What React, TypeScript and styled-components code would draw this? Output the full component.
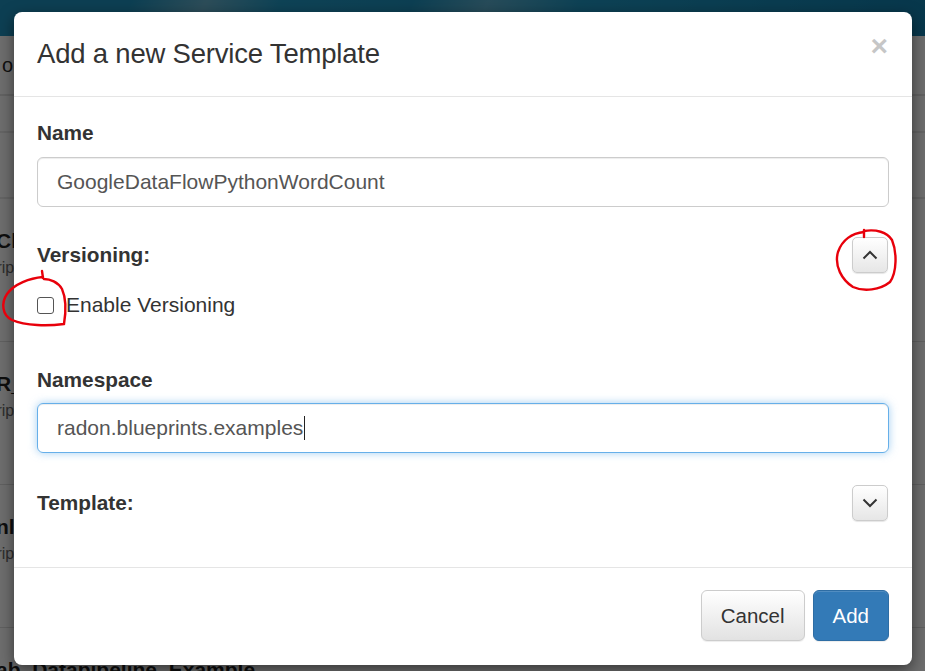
import React, { ReactElement } from 'react';
import styled, { createGlobalStyle } from 'styled-components';

const GlobalStyle = createGlobalStyle`
  html, body {
    margin: 0;
    padding: 0;
    width: 925px;
    height: 671px;
    overflow: hidden;
    font-family: "Liberation Sans", Arial, sans-serif;
    color: #333;
  }
`;

const Page = styled.div`
  position: relative;
  width: 925px;
  height: 671px;
  overflow: hidden;
  background: #dcdcdc;
`;

const TopBar = styled.div`
  height: 36px;
  background: linear-gradient(
    112deg,
    #1a7fa6 0%,
    #1a7fa6 14%,
    #5a9bb3 22%,
    #1d86ad 30%,
    #1a7fa6 44%,
    #4f98b4 52%,
    #1b84ab 62%,
    #0f6f98 100%
  );
`;

const Toolbar = styled.div`
  height: 58px;
  border-bottom: 2px solid #c4c4c4;
  display: flex;
  align-items: center;
  padding-left: 2px;
  font-size: 20px;
  color: #222;
`;

const FilterBar = styled.div`
  height: 35px;
  border-bottom: 2px solid #c8c8c8;
`;

const FilterBarLow = styled.div`
  height: 64px;
  border-bottom: 2px solid #c8c8c8;
`;

const List = styled.div`
  margin-left: -4px;
`;

const ListItem = styled.div`
  height: 143px;
  border-bottom: 1px solid #c0c0c0;
  padding-top: 30px;
  box-sizing: border-box;
  display: flex;
  flex-direction: column;
  gap: 6px;
`;

const ItemTitle = styled.div`
  font-size: 21px;
  font-weight: 700;
  color: #1c1c1c;
  line-height: 24px;
`;

const ItemSub = styled.div`
  font-size: 16px;
  color: #5a5a5a;
  text-indent: -36px;
`;

const Backdrop = styled.div`
  position: absolute;
  inset: 0;
  background: rgba(0, 0, 0, 0.5);
`;

const ModalLayer = styled.div`
  position: absolute;
  inset: 0;
  padding: 12px 13px 6px 14px;
`;

const Dialog = styled.div`
  background: #fff;
  border-radius: 8px;
  box-shadow: 0 5px 15px rgba(0, 0, 0, 0.5);
  display: flex;
  flex-direction: column;
  height: 653px;
`;

const Header = styled.div`
  height: 85px;
  box-sizing: border-box;
  border-bottom: 1px solid #e5e5e5;
  padding: 0 24px 0 23px;
  display: flex;
  align-items: center;
  justify-content: space-between;
`;

const Title = styled.h4`
  margin: 0;
  font-size: 27.5px;
  font-weight: 400;
  color: #333;
  letter-spacing: -0.2px;
`;

const Close = styled.span`
  font-size: 30px;
  font-weight: 700;
  color: #000;
  opacity: 0.22;
  line-height: 1;
  margin-top: -16px;
`;

const Body = styled.div`
  flex: 1;
  padding: 24px 23px 0;
  display: flex;
  flex-direction: column;
`;

const Label = styled.div<{ $gap?: number }>`
  font-size: 20.8px;
  font-weight: 700;
  line-height: 24px;
  color: #333;
  margin-top: ${(p) => p.$gap ?? 0}px;
`;

const Field = styled.div<{ $focused?: boolean; $gap: number }>`
  margin-top: ${(p) => p.$gap}px;
  height: 50px;
  box-sizing: border-box;
  border: 1px solid ${(p) => (p.$focused ? '#66afe9' : '#ccc')};
  border-radius: 6px;
  padding: 0 19px;
  display: flex;
  align-items: center;
  font-size: 21px;
  color: #555;
  box-shadow: ${(p) =>
    p.$focused
      ? 'inset 0 1px 1px rgba(0,0,0,.075), 0 0 8px rgba(102,175,233,.6)'
      : 'inset 0 1px 1px rgba(0,0,0,.075)'};
`;

const Caret = styled.span`
  display: inline-block;
  width: 1px;
  height: 24px;
  background: #222;
  margin-left: 1px;
`;

const ToggleRow = styled.div<{ $gap: number }>`
  margin-top: ${(p) => p.$gap}px;
  display: flex;
  align-items: center;
  justify-content: space-between;
  height: 35px;
`;

const ToggleButton = styled.button`
  width: 36px;
  height: 36px;
  padding: 0;
  margin-right: 1px;
  border: 1px solid #ccc;
  border-radius: 5px;
  background: linear-gradient(to bottom, #fff 0%, #e6e6e6 100%);
  box-shadow: inset 0 1px 0 rgba(255, 255, 255, 0.15), 0 1px 1px rgba(0, 0, 0, 0.1);
  display: flex;
  align-items: center;
  justify-content: center;
`;

const CheckRow = styled.label`
  margin-top: 24px;
  display: flex;
  align-items: center;
  gap: 12px;
  height: 18px;
  font-size: 21px;
  color: #333;
`;

const CheckBox = styled.span`
  width: 15px;
  height: 15px;
  border: 1.6px solid #555;
  border-radius: 3px;
  background: #fff;
`;

const Footer = styled.div`
  border-top: 1px solid #e5e5e5;
  padding: 22px 23px 24px;
  display: flex;
  justify-content: flex-end;
  gap: 8px;
`;

const Button = styled.button<{ $primary?: boolean }>`
  height: 51px;
  padding: 0 19px;
  font-family: "Liberation Sans", Arial, sans-serif;
  font-size: 20.5px;
  border-radius: 6px;
  border: 1px solid ${(p) => (p.$primary ? '#2e6da4' : '#ccc')};
  color: ${(p) => (p.$primary ? '#fff' : '#333')};
  background: ${(p) =>
    p.$primary ? '#337ab7' : 'linear-gradient(to bottom, #fff 0%, #e2e2e2 100%)'};
  box-shadow: inset 0 1px 0 rgba(255, 255, 255, 0.15), 0 1px 1px rgba(0, 0, 0, 0.075);
`;

const Annotations = styled.svg`
  position: absolute;
  left: 0;
  top: 0;
  pointer-events: none;
`;

const Chevron = ({ up }: { up?: boolean }) => (
  <svg width="16" height="10" viewBox="0 0 16 10">
    <path
      d={up ? 'M1.5 8.5 L8 2 L14.5 8.5' : 'M1.5 1.5 L8 8 L14.5 1.5'}
      fill="none"
      stroke="#333"
      strokeWidth="2"
    />
  </svg>
);

const items = [
  { title: 'Cloud_Example', sub: 'Description' },
  { title: 'R_Example', sub: 'Description' },
  { title: 'nlp_Example', sub: 'Description' },
  { title: 'ab_Datapipeline_Example', sub: 'Description' },
];

const App = (): ReactElement => {
  return (
    <Page>
      <GlobalStyle />
      <TopBar />
      <Toolbar>o</Toolbar>
      <FilterBar />
      <FilterBarLow />
      <List>
        {items.map((item) => (
          <ListItem key={item.title}>
            <ItemTitle>{item.title}</ItemTitle>
            <ItemSub>{item.sub}</ItemSub>
          </ListItem>
        ))}
      </List>

      <Backdrop />
      <ModalLayer>
        <Dialog>
          <Header>
            <Title>Add a new Service Template</Title>
            <Close>×</Close>
          </Header>
          <Body>
            <Label>Name</Label>
            <Field $gap={12}>GoogleDataFlowPythonWordCount</Field>

            <ToggleRow $gap={30}>
              <Label>Versioning:</Label>
              <ToggleButton>
                <Chevron up />
              </ToggleButton>
            </ToggleRow>
            <CheckRow>
              <CheckBox />
              Enable Versioning
            </CheckRow>

            <Label $gap={54}>Namespace</Label>
            <Field $gap={11} $focused>
              radon.blueprints.examples
              <Caret />
            </Field>

            <ToggleRow $gap={32}>
              <Label>Template:</Label>
              <ToggleButton>
                <Chevron />
              </ToggleButton>
            </ToggleRow>
          </Body>
          <Footer>
            <Button>Cancel</Button>
            <Button $primary>Add</Button>
          </Footer>
        </Dialog>
      </ModalLayer>

      <Annotations width="925" height="671" viewBox="0 0 925 671">
        <g fill="none" stroke="#e8000b" strokeWidth="2.4" strokeLinecap="round">
          <path d="M43 277 C30 278 14 284 7 294 C1 303 2 315 12 320 C26 326 48 326 64 324 C66 312 66 298 62 289 C58 282 50 279 44 279" />
          <path d="M42 271 L43 278" />
          <path d="M864 232 C852 233 842 240 838 252 C834 266 842 280 853 287 C864 292 880 290 890 282 C897 272 897 252 892 240 C887 232 876 229 864 231" />
          <path d="M864 230 L864 237" />
        </g>
      </Annotations>
    </Page>
  );
};

export default App;
